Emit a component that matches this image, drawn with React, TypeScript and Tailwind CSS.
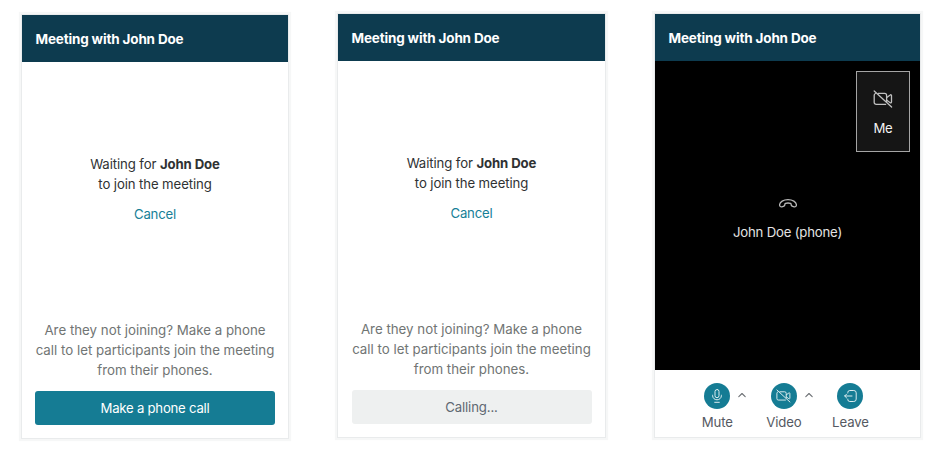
import type { ReactNode } from "react";

function Card({ className = "", children }: { className?: string; children: ReactNode }) {
  return (
    <section
      className={`flex h-[423px] shrink-0 flex-col bg-white shadow-[0_0_0_1px_#e9ebec,0_0_1px_3px_#f6f7f7] ${className}`}
    >
      <header className="flex h-[47px] shrink-0 items-center bg-[#0d3b4f] pt-[2px] pl-[13.5px] text-[13.5px] font-bold tracking-[-0.16px] text-white">
        Meeting with John Doe
      </header>
      {children}
    </section>
  );
}

function Waiting({ children }: { children: ReactNode }) {
  return (
    <div className="flex flex-1 flex-col items-center pt-[92px] pb-[13px] text-center text-[13.2px] leading-[20px]">
      <p className="tracking-[-0.11px] text-[#2f3233]">
        Waiting for <b className="font-bold">John Doe</b>
        <br />
        to join the meeting
      </p>
      <a className="mt-[10px] tracking-[-0.2px] text-[#177f97]">Cancel</a>
      <p className="mt-auto mb-[11px] text-[13.3px] whitespace-nowrap text-[#717574]">
        Are they not joining? Make a phone
        <br />
        call to let participants join the meeting
        <br />
        from their phones.
      </p>
      {children}
    </div>
  );
}

function VideoOff({ className }: { className: string }) {
  return (
    <svg className={className} viewBox="0 0 20 18" fill="none" stroke="currentColor" strokeWidth="1.3" strokeLinecap="round" strokeLinejoin="round">
      <path d="M5.2 3.4H11.6a2 2 0 0 1 2 2v6.2M12.6 14.4H3.2a2 2 0 0 1-2-2V5.4a2 2 0 0 1 1.2-1.9" />
      <path d="M13.8 7.4l3.4-2.5a.8.8 0 0 1 1.3.6v6.6a.8.8 0 0 1-1.3.6l-3.4-2.5" />
      <path d="M1.2 1L18.6 17" />
    </svg>
  );
}

function Mic() {
  return (
    <svg className="h-[14px] w-[10px]" viewBox="0 0 10 14" fill="none" stroke="currentColor" strokeWidth="1" strokeLinecap="round">
      <rect x="3" y=".5" width="4" height="8.2" rx="2" />
      <path d="M.6 6.2v.5a4.4 4.1 0 0 0 8.8 0v-.5M2.7 13.3h4.6" />
    </svg>
  );
}

function LeaveIcon() {
  return (
    <svg className="h-[12px] w-[13px]" viewBox="0 0 13 12" fill="none" stroke="currentColor" strokeWidth="1" strokeLinecap="round" strokeLinejoin="round">
      <path d="M3.8 2.9V2.5a2 2 0 0 1 2-2h4a2.4 2.4 0 0 1 2.4 2.4v6.2a2.4 2.4 0 0 1-2.4 2.4h-4a2 2 0 0 1-2-2v-.4" />
      <path d="M8 6H.7M2.6 4.1L.7 6l1.9 1.9" />
    </svg>
  );
}

function Handset() {
  return (
    <svg className="h-[9px] w-[18px]" viewBox="0 0 18 9" fill="none" stroke="currentColor" strokeWidth="1.3" strokeLinejoin="round">
      <path d="M9 .7C4.4.7.8 2.9.6 5.7c-.1 1.5.8 2.3 2.3 2.1 1.7-.2 3.1-.9 3-2.4-.1-.9.7-1.4 3.1-1.4s3.2.5 3.1 1.4c-.1 1.5 1.3 2.2 3 2.4 1.5.2 2.4-.6 2.3-2.1C17.2 2.9 13.6.7 9 .7Z" />
    </svg>
  );
}

function Control({ label, children }: { label: string; children: ReactNode }) {
  return (
    <div className="flex w-[42px] flex-col items-center text-[#555962]">
      <span className="flex size-[26px] items-center justify-center rounded-full bg-[#157c94] text-[#dcecef]">{children}</span>
      <span className="mt-[3px] text-[13.2px] leading-[20px] tracking-[-0.1px]">{label}</span>
    </div>
  );
}

function Chevron() {
  return (
    <div className="w-[24.6px] pt-[9px]">
      <svg className="h-[6px] w-[8px]" viewBox="0 0 8 6" fill="none" stroke="#6b6f73" strokeWidth="1.1" strokeLinecap="round" strokeLinejoin="round">
        <path d="M.8 4.6L4 1.5l3.2 3.1" />
      </svg>
    </div>
  );
}

export default function App() {
  return (
    <main className="flex h-[460px] w-[947px] items-start overflow-hidden bg-white pt-[14px] pl-[22px] font-['Inter',sans-serif]">
      <Card className="mt-[1px] w-[266px]">
        <Waiting>
          <button className="h-[34px] w-[240px] rounded-[3px] bg-[#157c94] tracking-[-0.25px] text-white">Make a phone call</button>
        </Waiting>
      </Card>
      <Card className="ml-[50px] w-[267px]">
        <Waiting>
          <button className="h-[34px] w-[240px] rounded-[3px] bg-[#eef0f0] tracking-[-0.15px] text-[#5f6872]">Calling...</button>
        </Waiting>
      </Card>
      <Card className="ml-[50px] w-[265px]">
        <div className="relative flex h-[309px] flex-col items-center bg-black pt-[138px] text-[13.2px] text-[#e4e4e4]">
          <span className="text-[#b8b8b8]"><Handset /></span>
          <span className="mt-[14px] leading-[20px] tracking-[-0.2px]">John Doe (phone)</span>
          <div className="absolute top-[10px] right-[10px] flex h-[81px] w-[54px] flex-col items-center border border-[#a5a5a5] bg-[#151515] pt-[18px]">
            <VideoOff className="h-[18px] w-[20px] text-[#c0c0c0]" />
            <span className="mt-[10px] leading-[20px] tracking-[-0.3px] text-[#f2f2f2]">Me</span>
          </div>
        </div>
        <div className="flex pt-[13px] pl-[41.3px]">
          <Control label="Mute"><Mic /></Control>
          <Chevron />
          <Control label="Video"><VideoOff className="h-[14px] w-[15px]" /></Control>
          <Chevron />
          <Control label="Leave"><LeaveIcon /></Control>
        </div>
      </Card>
    </main>
  );
}
